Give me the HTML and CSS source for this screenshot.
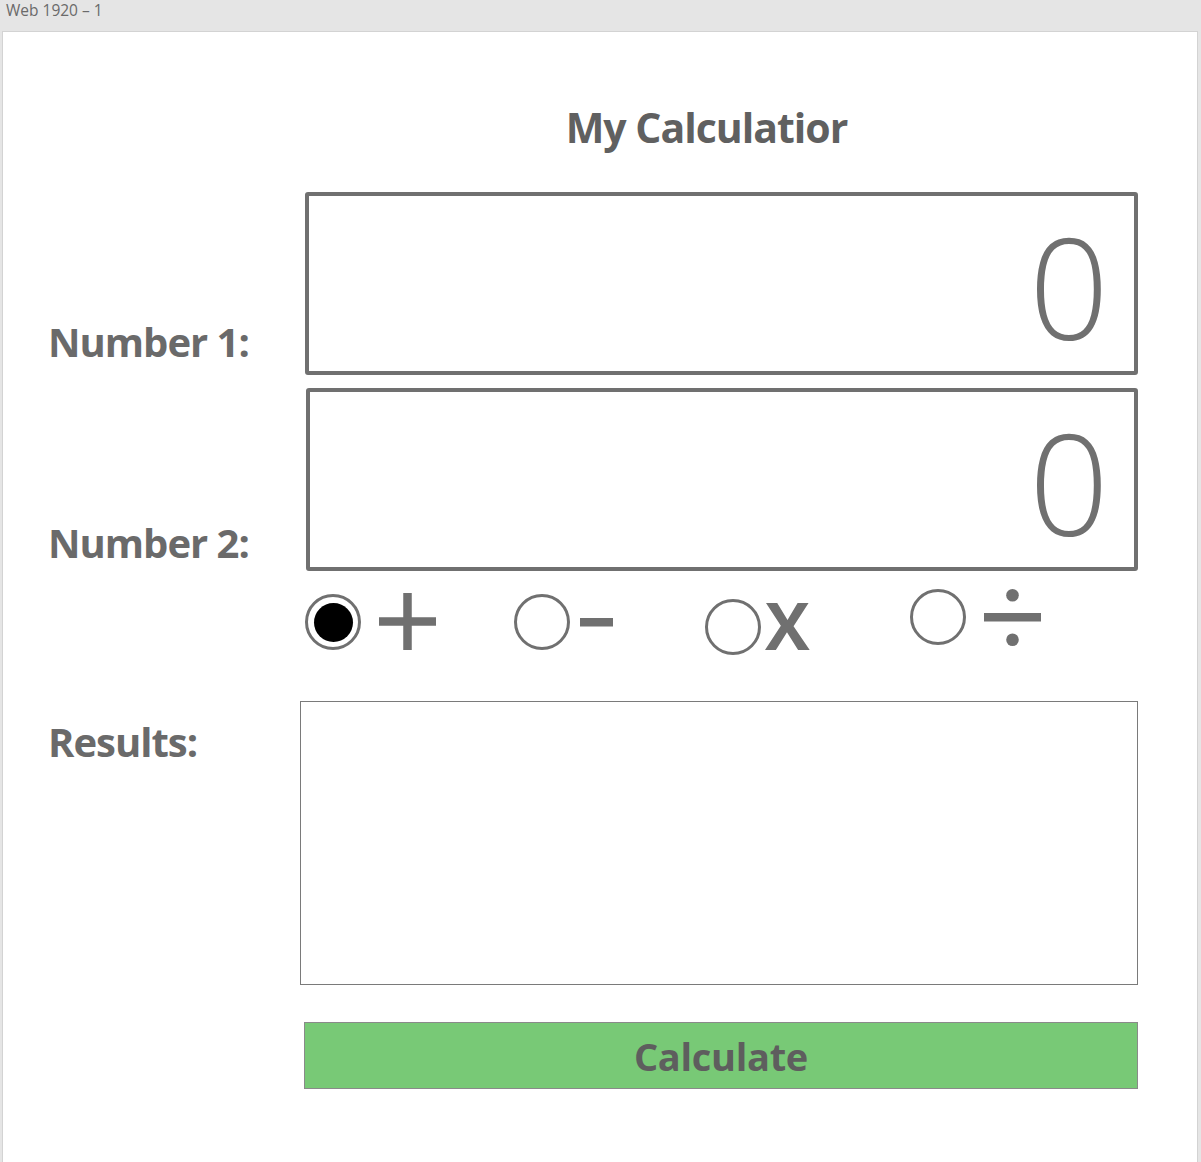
FILE: index.html
```html
<!DOCTYPE html>
<html lang="en">
<head>
<meta charset="utf-8">
<title>My Calculatior</title>
<link rel="stylesheet" href="styles.css">
</head>
<body>
<div class="topbar">Web 1920 – 1</div>
<div class="board">
  <div class="calc">
    <h1 class="title">My Calculatior</h1>

    <div class="label label-n1">Number 1:</div>
    <div class="numbox numbox-1"><span class="zero">0</span></div>

    <div class="label label-n2">Number 2:</div>
    <div class="numbox numbox-2"><span class="zero">0</span></div>

    <div class="ops">
      <div class="op op-add">
        <span class="radio radio-on"><span class="dot"></span></span>
        <svg class="sym sym-plus" width="57" height="57" viewBox="0 0 57 57"><rect x="0" y="24.25" width="57" height="8.5" fill="#707070"/><rect x="24.25" y="0" width="8.5" height="57" fill="#707070"/></svg>
      </div>
      <div class="op op-sub">
        <span class="radio"></span>
        <svg class="sym sym-minus" width="33" height="9" viewBox="0 0 33 9"><rect x="0" y="0" width="33" height="8.5" fill="#707070"/></svg>
      </div>
      <div class="op op-mul">
        <span class="radio"></span>
        <span class="times">X</span>
      </div>
      <div class="op op-div">
        <span class="radio"></span>
        <svg class="sym sym-div" width="57" height="58" viewBox="0 0 57 58"><circle cx="28.5" cy="6.3" r="6.3" fill="#707070"/><rect x="0" y="24" width="57" height="8.5" fill="#707070"/><circle cx="28.5" cy="50.7" r="6.3" fill="#707070"/></svg>
      </div>
    </div>

    <div class="label label-res">Results:</div>
    <div class="results"></div>

    <button class="calc-btn" type="button">Calculate</button>
  </div>
</div>
</body>
</html>
```

FILE: styles.css
```css
html, body {
  margin: 0;
  padding: 0;
}

body {
  background: #e5e5e5;
  font-family: "Open Sans", "Noto Sans", "Liberation Sans", sans-serif;
  height: 1162px;
  overflow: hidden;
}

.topbar {
  height: 31px;
  padding-left: 6px;
  font-size: 15.5px;
  line-height: 21px;
  color: #6a6a6a;
  box-sizing: border-box;
}

.board {
  margin-left: 2px;
  width: 1196px;
  height: 1140px;
  box-sizing: border-box;
  background: #ffffff;
  border: 1px solid #d3d3d3;
}

.calc {
  display: grid;
  grid-template-columns: 257px 833px;
  padding-left: 45px;
  padding-top: 67px;
  color: #686868;
}

.title {
  grid-column: 2;
  margin: 0 0 37px 0;
  padding-right: 30px;
  text-align: center;
  font-size: 41px;
  font-weight: 700;
  line-height: 56px;
  letter-spacing: -1px;
  color: #606060;
}

.label {
  grid-column: 1;
  font-size: 40px;
  font-weight: 700;
  line-height: 56px;
  letter-spacing: -1px;
  color: #6a6a6a;
  white-space: nowrap;
}

.label-n1 {
  align-self: end;
  margin-bottom: 5px;
}

.label-n2 {
  align-self: end;
  margin-bottom: 0;
}

.label-res {
  align-self: start;
  margin-top: 56px;
}

.numbox {
  grid-column: 2;
  height: 183px;
  box-sizing: border-box;
  border: 4px solid #707070;
  border-radius: 3px;
  display: flex;
  justify-content: flex-end;
  align-items: flex-start;
  padding: 20px 25px 0 0;
}

.numbox-2 {
  margin-top: 13px;
  margin-left: 1px;
}

.zero {
  font-size: 140px;
  font-weight: 300;
  line-height: 140px;
  color: #707070;
}

.ops {
  grid-column: 2;
  margin-top: 18px;
  height: 69px;
  display: grid;
  grid-template-columns: 209px 191px 205px auto;
  align-items: start;
}

.op {
  display: flex;
  align-items: center;
}

.radio {
  width: 56px;
  height: 56px;
  box-sizing: border-box;
  border: 3.5px solid #707070;
  border-radius: 50%;
  background: #fff;
  display: flex;
  align-items: center;
  justify-content: center;
  flex: none;
}

.dot {
  width: 39px;
  height: 39px;
  border-radius: 50%;
  background: #000;
}

.sym {
  display: block;
  flex: none;
}

.op-add {
  align-items: flex-start;
  margin-top: 4px;
}

.op-add .radio {
  margin-top: 1px;
}

.op-add .sym-plus {
  margin-left: 18px;
}

.op-sub {
  margin-top: 5px;
}

.op-sub .sym-minus {
  margin-left: 10px;
}

.op-mul {
  align-items: flex-start;
  margin-top: 10px;
}

.times {
  font-size: 67px;
  font-weight: 700;
  line-height: 67px;
  color: #707070;
  margin-top: -8px;
  margin-left: 4px;
}

.op-div {
  align-items: flex-start;
  margin-top: 0;
}

.op-div .sym-div {
  margin-left: 18px;
}

.results {
  grid-column: 2;
  margin-top: 43px;
  margin-left: -5px;
  width: 838px;
  height: 284px;
  box-sizing: border-box;
  border: 1px solid #7a7a7a;
  background: #fff;
}

.calc-btn {
  grid-column: 2;
  margin: 37px 0 0 -1px;
  width: 834px;
  height: 67px;
  box-sizing: border-box;
  border: 1px solid #8a8a8a;
  background: #78c976;
  color: #5e5e5e;
  font-family: "Open Sans", "Noto Sans", "Liberation Sans", sans-serif;
  font-size: 38px;
  font-weight: 700;
  letter-spacing: -0.3px;
  line-height: 62px;
  padding: 0;
  text-align: center;
  cursor: pointer;
}
```
